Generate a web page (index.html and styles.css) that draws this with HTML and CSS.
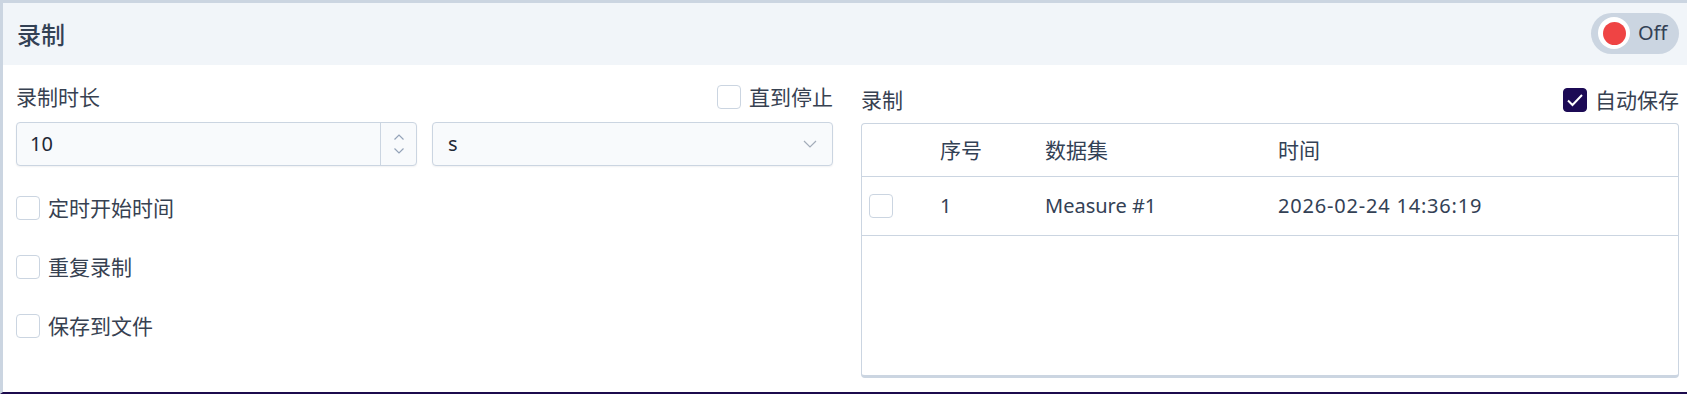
FILE: index.html
```html
<!DOCTYPE html>
<html lang="zh-CN">
<head>
<meta charset="utf-8">
<title>录制</title>
<link rel="stylesheet" href="styles.css">
</head>
<body>
<div class="panel">
	<div class="panel-head">
		<span class="panel-title">录制</span>
		<div class="toggle">
			<span class="knob"><i></i></span>
			<span class="toggle-text lat">Off</span>
		</div>
	</div>
	<div class="panel-body">
		<div class="col">
			<div class="row-top">
				<span class="label">录制时长</span>
				<label class="check"><span class="box"></span>直到停止</label>
			</div>
			<div class="fields">
				<div class="num">
					<span class="num-val lat">10</span>
					<span class="spin">
						<svg width="12" height="8" viewBox="0 0 12 8"><path d="M1.5 6.5 6 2l4.5 4.5" fill="none" stroke="#94a3b8" stroke-width="1.2"/></svg>
						<svg width="12" height="8" viewBox="0 0 12 8"><path d="M1.5 1.5 6 6l4.5-4.5" fill="none" stroke="#94a3b8" stroke-width="1.2"/></svg>
					</span>
				</div>
				<div class="select">
					<span class="lat">s</span>
					<svg width="14" height="8" viewBox="0 0 14 8"><path d="M1 1l6 6 6-6" fill="none" stroke="#a3acb9" stroke-width="1.2"/></svg>
				</div>
			</div>
			<label class="check opt"><span class="box"></span>定时开始时间</label>
			<label class="check opt"><span class="box"></span>重复录制</label>
			<label class="check opt"><span class="box"></span>保存到文件</label>
		</div>
		<div class="col">
			<div class="row-top right-top">
				<span class="label">录制</span>
				<label class="check"><span class="box on"><svg width="18" height="14" viewBox="0 0 18 14"><path d="M2 7.5l4.5 4.5L16 2" fill="none" stroke="#fff" stroke-width="2"/></svg></span>自动保存</label>
			</div>
			<div class="table">
				<div class="tr th">
					<span></span>
					<span>序号</span>
					<span>数据集</span>
					<span>时间</span>
				</div>
				<div class="tr td">
					<span><span class="box"></span></span>
					<span class="lat">1</span>
					<span class="lat">Measure #1</span>
					<span class="lat date">2026-02-24 14:36:19</span>
				</div>
			</div>
		</div>
	</div>
</div>
</body>
</html>
```
FILE: styles.css
```css
*{margin:0;padding:0;box-sizing:border-box;}
body{background:#fff;font:21px/1.4 "Noto Sans CJK SC",sans-serif;color:#374151;}
.lat{font-family:"Noto Sans","Noto Sans CJK SC",sans-serif;font-size:20px;}
/* panel */
.panel{height:394px;border-top:3px solid #cbd5e1;border-left:3px solid #cbd5e1;border-bottom:2px solid #1c0b4d;display:flex;flex-direction:column;}
.panel-head{height:62px;background:#f1f5f9;display:flex;align-items:center;justify-content:space-between;padding:0 8px 0 14px;}
.panel-title{font-size:24px;font-weight:500;color:#334155;}
.toggle{width:88px;height:41px;border-radius:21px;background:#cbd5e1;display:flex;align-items:center;padding-left:7px;gap:8px;margin-top:-2px;}
.knob{width:32px;height:32px;border-radius:50%;background:#fff;display:flex;align-items:center;justify-content:center;}
.knob i{display:block;width:23px;height:23px;border-radius:50%;background:#ef4444;}
.toggle-text{color:#334155;}
.panel-body{flex:1;display:grid;grid-template-columns:817px 818px;gap:28px;padding:19px 8px 0 13px;}
.col{display:flex;flex-direction:column;}
.row-top{height:26px;display:flex;align-items:center;justify-content:space-between;}
.right-top{margin-top:3px;}
.label{color:#374151;}
.check{display:flex;align-items:center;gap:8px;color:#374151;}
.box{width:24px;height:24px;border:1.5px solid #cbd5e1;border-radius:4px;background:#fff;display:flex;align-items:center;justify-content:center;}
.box.on{background:#1c0a55;border-color:#1c0a55;}
/* inputs */
.fields{display:grid;grid-template-columns:1fr 1fr;gap:15px;margin-top:12px;}
.num,.select{height:44px;background:#f8fafc;border:1.5px solid #cbd5e1;border-radius:4px;display:flex;align-items:center;box-shadow:0 1px 2px rgba(15,23,42,0.06);}
.num-val{flex:1;padding-left:13px;color:#1f2937;}
.spin{width:36px;height:100%;border-left:1.5px solid #cbd5e1;display:flex;flex-direction:column;align-items:center;justify-content:center;gap:6px;}
.spin svg{display:block;}
.select{justify-content:space-between;padding:0 15px;color:#1f2937;}
.opt{margin-top:29px;height:25px;}
.opt + .opt{margin-top:34px;}
/* table */
.table{margin-top:10px;height:255px;border:1.5px solid #cbd5e1;border-bottom:3.5px solid #cbd5e1;border-radius:4px;}
.tr{display:grid;grid-template-columns:78px 105px 233px 1fr;align-items:center;border-bottom:1.5px solid #cbd5e1;color:#334155;}
.th{height:53px;}
.td{height:59px;}
.td .box{margin-left:7px;}
.date{letter-spacing:0.8px;}
```
